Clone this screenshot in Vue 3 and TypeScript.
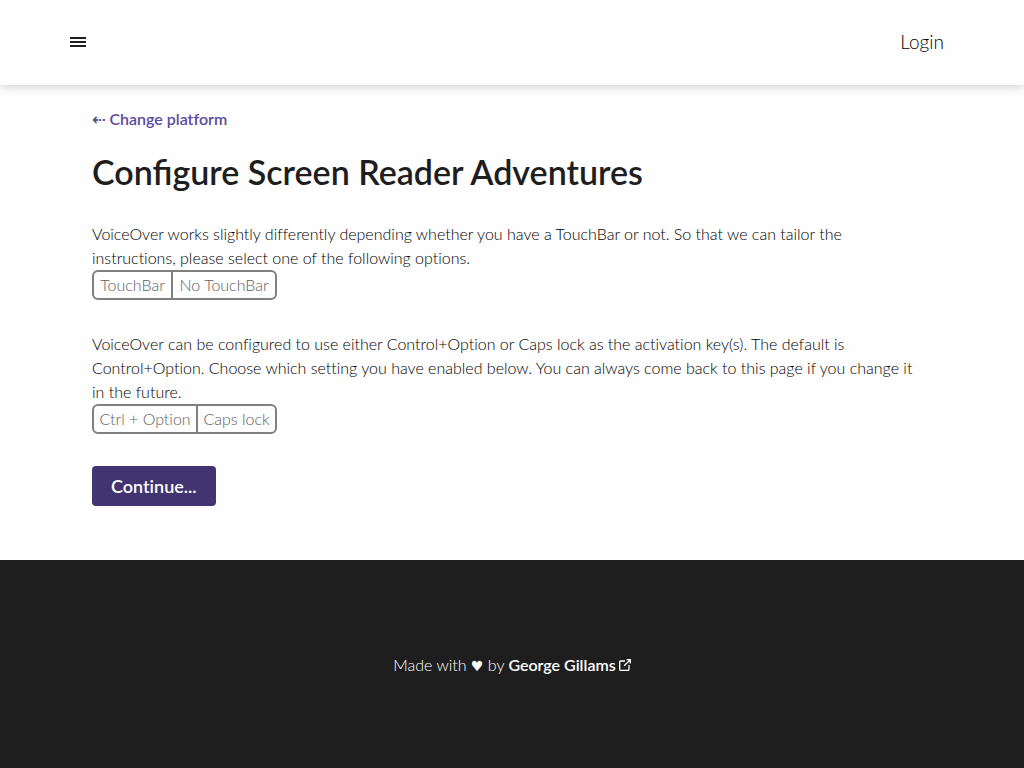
<script setup lang="ts">
import { ref } from 'vue'

interface Question {
  name: string
  text: string
  options: string[]
}

const questions: Question[] = [
  {
    name: 'touchbar',
    text: 'VoiceOver works slightly differently depending whether you have a TouchBar or not. So that we can tailor the instructions, please select one of the following options.',
    options: ['TouchBar', 'No TouchBar'],
  },
  {
    name: 'activation',
    text: 'VoiceOver can be configured to use either Control+Option or Caps lock as the activation key(s). The default is Control+Option. Choose which setting you have enabled below. You can always come back to this page if you change it in the future.',
    options: ['Ctrl + Option', 'Caps lock'],
  },
]

const answers = ref<Record<string, string>>({})
</script>

<template>
  <div class="page">
    <header class="header">
      <button class="menu" type="button" aria-label="Menu">
        <svg width="16" height="10" viewBox="0 0 16 10" aria-hidden="true">
          <path d="M0 0h16v2H0zM0 4h16v2H0zM0 8h16v2H0z" fill="currentColor" />
        </svg>
      </button>
      <a class="login" href="#login">Login</a>
    </header>

    <main class="main">
      <a class="back" href="#platform"><span class="arrow">⇠</span> Change platform</a>
      <h1>Configure Screen Reader Adventures</h1>
      <fieldset v-for="q in questions" :key="q.name" class="question">
        <legend>{{ q.text }}</legend>
        <div class="toggle">
          <label v-for="option in q.options" :key="option" class="option">
            <input v-model="answers[q.name]" type="radio" :name="q.name" :value="option" />
            <span>{{ option }}</span>
          </label>
        </div>
      </fieldset>
      <button class="continue" type="button">Continue...</button>
    </main>

    <footer class="footer">
      <p>
        Made with <span class="heart">♥</span> by
        <a href="#george">George Gillams<svg width="12" height="12" viewBox="0 0 12 12" aria-hidden="true">
          <path d="M6 2H1.5Q.7 2 .7 2.8V10.5Q.7 11.3 1.5 11.3H9.2Q10 11.3 10 10.5V6M7.5.7h3.8v3.8M11 1L5.2 6.8" fill="none" stroke="currentColor" stroke-width="1.3" />
        </svg></a>
      </p>
    </footer>
  </div>
</template>

<style>
body {
  margin: 0;
  background: #fefefe;
}
</style>

<style scoped>
.page {
  display: flex;
  flex-direction: column;
  min-height: 100vh;
  color: #1e1e1e;
  font: 300 16px/24px Lato, "Open Sans", sans-serif;
  font-variant-ligatures: none;
}
.header {
  display: flex;
  align-items: center;
  justify-content: space-between;
  box-sizing: border-box;
  height: 85px;
  padding: 0 80px 2px 62px;
  background: #fefefe;
  box-shadow: 0 0 10px rgba(0, 0, 0, 0.25);
}
.menu {
  display: flex;
  padding: 8px;
  border: 0;
  background: none;
  color: inherit;
}
.login {
  color: #000;
  font-size: 19px;
  text-decoration: none;
}
.main {
  box-sizing: border-box;
  width: 100%;
  max-width: 888px;
  margin: 0 auto;
  padding: 22px 24px 54px;
}
.back {
  display: block;
  color: #5b4a9d;
  font-weight: 600;
  text-decoration: none;
}
.arrow {
  font-family: "DejaVu Sans", sans-serif;
  font-weight: 700;
}
h1 {
  margin: 16px 0 26px;
  font-size: 34px;
  line-height: 48px;
  font-weight: 600;
  font-variant-ligatures: normal;
}
.question {
  min-width: 0;
  margin: 0 0 32px;
  padding: 0;
  border: 0;
}
legend {
  padding: 0 10px 0 0;
  color: #000;
}
.toggle {
  display: flex;
  box-sizing: border-box;
  width: 185px;
  height: 30px;
  border: 2px solid #808080;
  border-radius: 6px;
  color: #606060;
  line-height: 26px;
}
.option {
  position: relative;
  flex: 1 0 auto;
  text-align: center;
}
.option + .option {
  border-left: 2px solid #808080;
}
.option input {
  position: absolute;
  inset: 0;
  margin: 0;
  opacity: 0;
}
.continue {
  display: block;
  height: 40px;
  padding: 0 19px;
  border: 0;
  border-radius: 4px;
  background: #413471;
  color: #fff;
  font: 600 18px/38px Lato, "Open Sans", sans-serif;
  font-variant-ligatures: none;
}
.footer {
  flex: 1;
  display: flex;
  align-items: center;
  justify-content: center;
  background: #1e1e1e;
  color: #fff;
}
.footer p {
  margin: 2px 0 0;
}
.footer a {
  color: inherit;
  font-weight: 600;
  text-decoration: none;
}
.footer svg {
  margin-left: 3px;
}
.heart {
  font-family: "DejaVu Sans", sans-serif;
  font-size: 14px;
  font-weight: 400;
}
</style>
